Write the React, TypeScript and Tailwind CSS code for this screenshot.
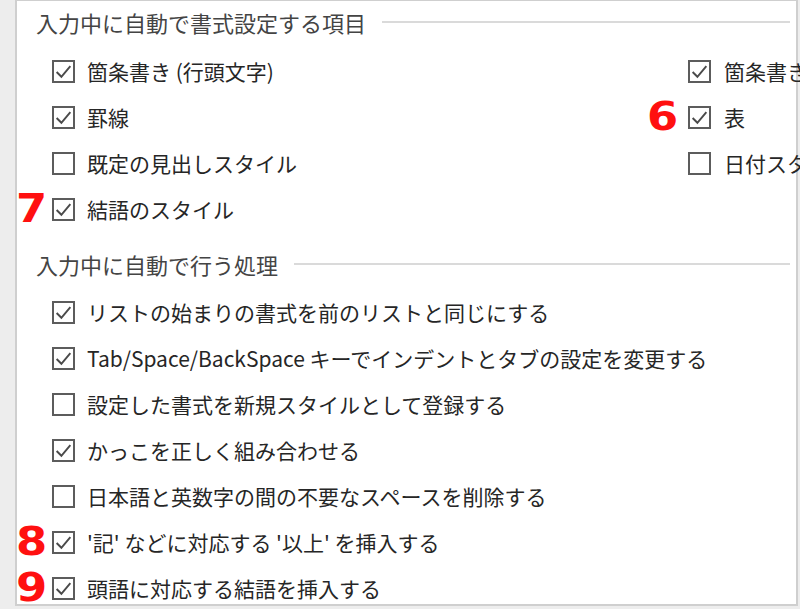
const font = { fontFamily: '"Noto Sans CJK JP", "Noto Sans", sans-serif' };

type Item = { label: string; checked: boolean; mark?: string };

const topLeft: Item[] = [
  { label: "箇条書き (行頭文字)", checked: true },
  { label: "罫線", checked: true },
  { label: "既定の見出しスタイル", checked: false },
  { label: "結語のスタイル", checked: true, mark: "7" },
];

const topRight: Item[] = [
  { label: "箇条書き (段落番号)", checked: true },
  { label: "表", checked: true, mark: "6" },
  { label: "日付スタイル", checked: false },
];

const bottom: Item[] = [
  { label: "リストの始まりの書式を前のリストと同じにする", checked: true },
  { label: "Tab/Space/BackSpace キーでインデントとタブの設定を変更する", checked: true },
  { label: "設定した書式を新規スタイルとして登録する", checked: false },
  { label: "かっこを正しく組み合わせる", checked: true },
  { label: "日本語と英数字の間の不要なスペースを削除する", checked: false },
  { label: "'記' などに対応する '以上' を挿入する", checked: true, mark: "8" },
  { label: "頭語に対応する結語を挿入する", checked: true, mark: "9" },
];

const Box = ({ checked }: { checked: boolean }) => (
  <div className="w-[23px] h-[23px] shrink-0 border-2 border-[#5c5c5c] bg-white flex items-center justify-center">
    {checked && (
      <svg width="19" height="19" viewBox="0 0 18 18" fill="none">
        <path d="M2.5 9.5 L7 14 L15.5 4" stroke="#4a4a4a" strokeWidth="1.8" />
      </svg>
    )}
  </div>
);

const Row = ({ item, slot, gap }: { item: Item; slot: string; gap: string }) => (
  <div className="h-[46px] flex items-center whitespace-nowrap">
    <div className={`${slot} shrink-0 h-full flex items-center justify-end`}>
      {item.mark && (
        <span
          className="text-[39px] font-bold leading-none text-[#ff1010] scale-x-115 -translate-y-[1px]"
          style={{ fontFamily: '"DejaVu Sans", sans-serif' }}
        >
          {item.mark}
        </span>
      )}
    </div>
    <Box checked={item.checked} />
    <span className={`${gap} text-[21px] text-[#262626] leading-none`}>{item.label}</span>
  </div>
);

const Heading = ({ text }: { text: string }) => (
  <div className="h-[46px] flex items-center pl-[19px]">
    <span className="text-[22px] text-[#444] leading-none whitespace-nowrap">{text}</span>
    <div className="flex-1 h-[2px] bg-[#dadada] ml-[16px] mr-[6px]" />
  </div>
);

export default function App() {
  return (
    <div className="w-[800px] h-[609px] bg-[#ededed] overflow-hidden" style={font}>
      <div className="ml-[15px] w-[783px] h-[606px] bg-white border-l-2 border-r-2 border-b-2 border-t border-[#cfcfcf]">
        <div className="h-[44px] flex items-center pl-[19px] -mt-[1px]">
          <span className="text-[22px] text-[#444] leading-none whitespace-nowrap">
            入力中に自動で書式設定する項目
          </span>
          <div className="flex-1 h-[2px] bg-[#dadada] ml-[16px] mr-[6px]" />
        </div>
        <div className="mt-[4px] flex">
          <div className="w-[623px] shrink-0">
            {topLeft.map((it) => (
              <Row key={it.label} item={it} slot="w-[35px] pr-[7px]" gap="ml-[12px]" />
            ))}
          </div>
          <div className="w-[160px] shrink-0">
            {topRight.map((it) => (
              <Row key={it.label} item={it} slot="w-[48px] pr-[12px]" gap="ml-[13px]" />
            ))}
          </div>
        </div>
        <div className="mt-[9px]">
          <Heading text="入力中に自動で行う処理" />
        </div>
        <div className="mt-[2px]">
          {bottom.map((it) => (
            <Row key={it.label} item={it} slot="w-[35px] pr-[7px]" gap="ml-[12px]" />
          ))}
        </div>
      </div>
    </div>
  );
}
